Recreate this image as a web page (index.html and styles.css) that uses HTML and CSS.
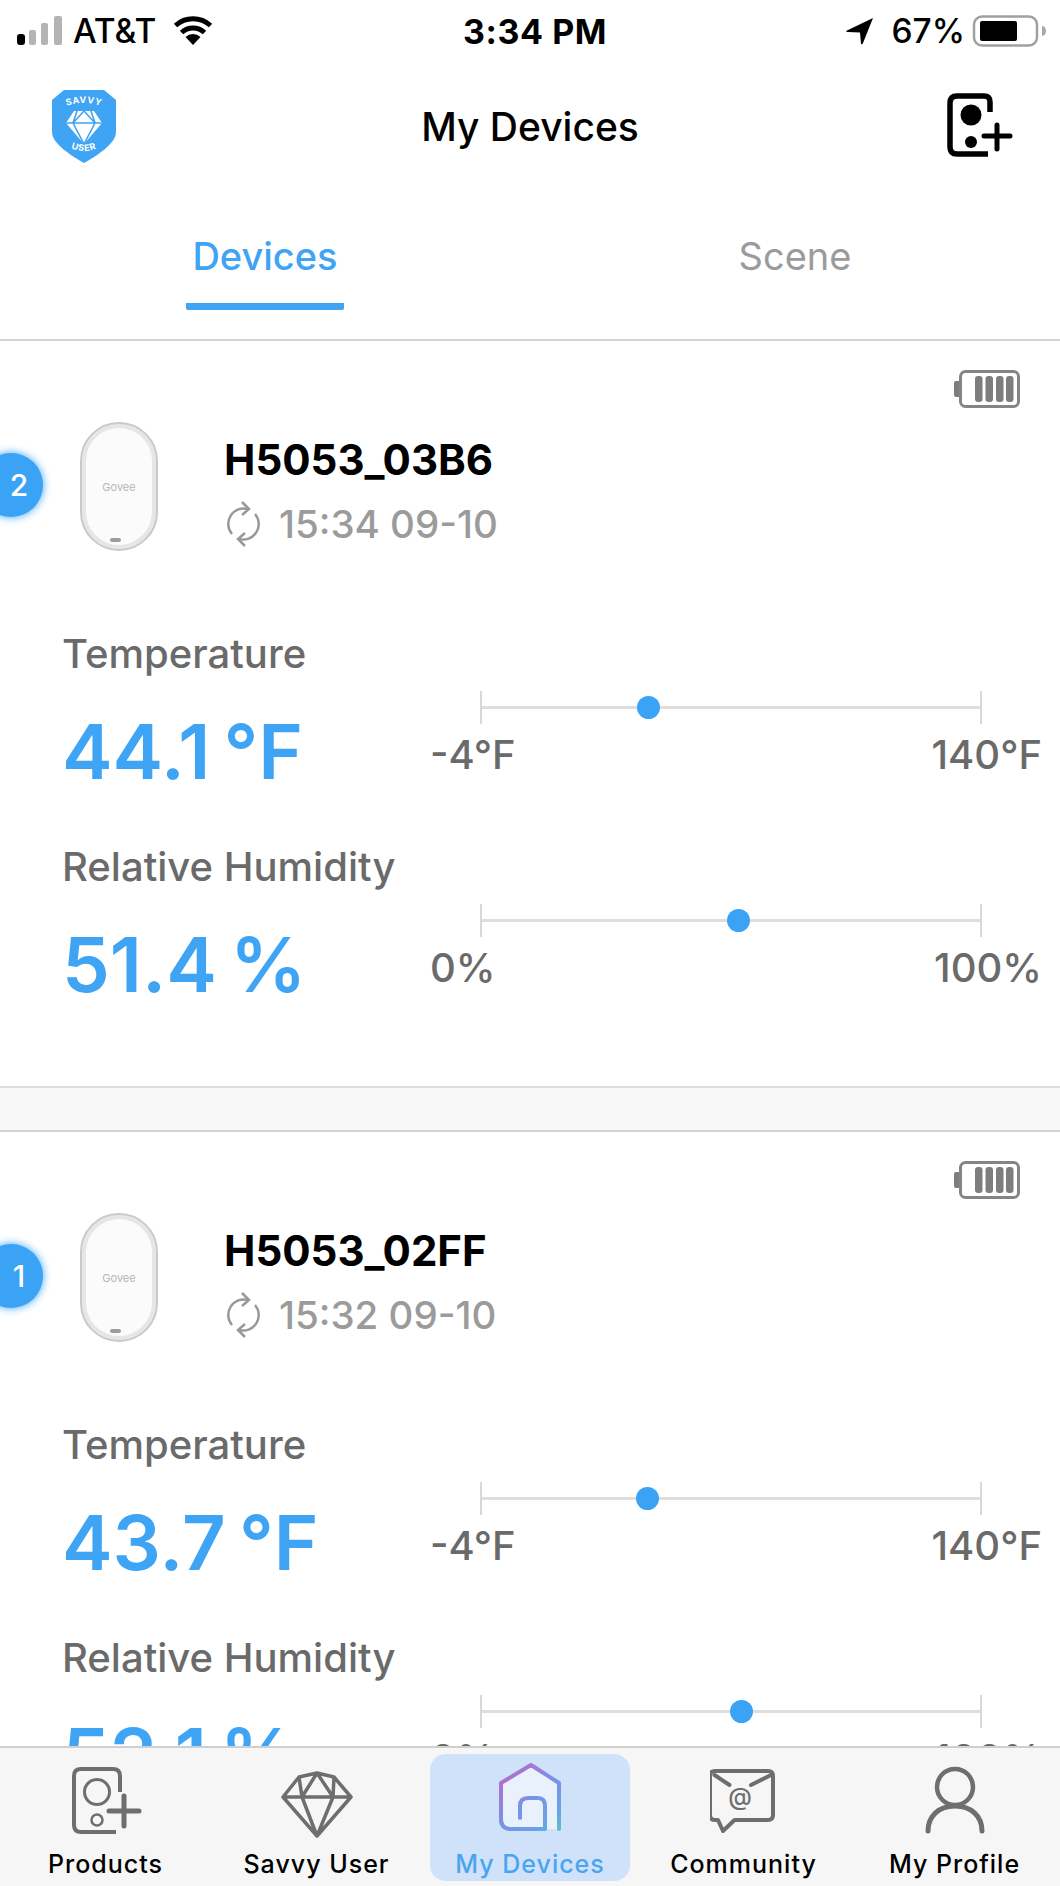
FILE: index.html
```html
<!DOCTYPE html>
<html lang="en">
<head>
    <meta charset="UTF-8">
    <meta name="viewport" content="width=device-width, initial-scale=1.0">
    <title>My Devices</title>
    <link rel="stylesheet" href="styles.css">
</head>
<body>

    <div class="status-bar">
        <div class="status-left">
            <svg class="signal" width="46" height="30" viewBox="0 0 46 30">
                <rect x="0" y="18" width="8" height="11" rx="3" fill="#000"/>
                <rect x="12" y="14" width="7" height="15" rx="2" fill="#b4b4b4"/>
                <rect x="24" y="7" width="7" height="22" rx="2" fill="#b4b4b4"/>
                <rect x="37" y="0" width="8" height="29" rx="2" fill="#b4b4b4"/>
            </svg>
            <span>AT&amp;T</span>
            <svg class="wifi" width="40" height="30" viewBox="0 0 40 30">
                <path d="M20 29 L12.5 21 A11 11 0 0 1 27.5 21 Z" fill="#000"/>
                <path d="M8.5 16.5 A17 17 0 0 1 31.5 16.5" fill="none" stroke="#000" stroke-width="5"/>
                <path d="M2.5 9.5 A26 26 0 0 1 37.5 9.5" fill="none" stroke="#000" stroke-width="5"/>
            </svg>
        </div>
        <div class="status-time">3:34 PM</div>
        <div class="status-right">
            <svg class="arrow" width="28" height="27" viewBox="0 0 28 27">
                <path d="M27 0 L0 13 Q0 14 2 14 L14 14.5 L15 26 Q16 27 17 25 Z" fill="#000"/>
            </svg>
            <span>67%</span>
            <svg class="battery-status" width="76" height="32" viewBox="0 0 76 32">
                <rect x="2" y="1.5" width="63" height="29" rx="8" fill="none" stroke="#a0a0a0" stroke-width="2.5"/>
                <rect x="8" y="6" width="37" height="20" rx="2" fill="#000"/>
                <path d="M70 11 a4 5 0 0 1 0 10 Z" fill="#a8a8a8"/>
            </svg>
        </div>
    </div>

    <div class="header">
        <svg class="shield" width="68" height="76" viewBox="0 0 68 76">
            <defs>
                <path id="shieldTop" d="M14 19 Q34 11 54 19"/>
                <path id="shieldBottom" d="M16 58 Q34 68 52 58"/>
            </defs>
            <path d="M14 2 H54 L66 12 V44 C66 56 46 68 34 75 C22 68 2 56 2 44 V12 Z" fill="#3fa4f4"/>
            <path d="M24 23 H44 L52 35 L34 56 L16 35 Z" fill="#fff"/>
            <path d="M16 35 H52 M27 23 L23 35 L34 56 L45 35 L41 23 M34 23 L23 35 M34 23 L45 35" fill="none" stroke="#3fa4f4" stroke-width="1.6"/>
            <text class="shield-text"><textPath href="#shieldTop" startOffset="50%">SAVVY</textPath></text>
            <text class="shield-text"><textPath href="#shieldBottom" startOffset="50%">USER</textPath></text>
        </svg>
        <h1>My Devices</h1>
        <svg class="add-device" width="66" height="66" viewBox="0 0 66 66">
            <path d="M43 19 V9 Q43 3 37 3 H10 Q3 3 3 10 V54 Q3 61 10 61 H41" fill="none" stroke="#000" stroke-width="5.5"/>
            <circle cx="24" cy="22" r="10.5" fill="#000"/>
            <circle cx="24" cy="49" r="6" fill="#000"/>
            <path d="M37 43 H63 M50 32 V56" fill="none" stroke="#000" stroke-width="5" stroke-linecap="round"/>
        </svg>
    </div>

    <div class="tabs">
        <div class="tab active"><span>Devices</span></div>
        <div class="tab"><span>Scene</span></div>
    </div>

    <div class="device-list">

        <div class="device-card">
            <div class="badge">2</div>
            <svg class="card-battery" width="68" height="38" viewBox="0 0 68 38">
                <path d="M7 11 H3 Q1 11 1 13 V25 Q1 27 3 27 H7 Z" fill="#7d7d7d"/>
                <rect x="7.5" y="1.5" width="58" height="35" rx="5" fill="#fff" stroke="#858585" stroke-width="3"/>
                <rect x="22" y="6" width="7.5" height="26" rx="3" fill="#7d7d7d"/>
                <rect x="32.5" y="6" width="7.5" height="26" rx="3" fill="#7d7d7d"/>
                <rect x="43" y="6" width="7.5" height="26" rx="3" fill="#7d7d7d"/>
                <rect x="53" y="6" width="7.5" height="26" rx="3" fill="#7d7d7d"/>
            </svg>
            <div class="device-top">
                <div class="sensor">
                    <span class="sensor-logo">Govee</span>
                    <span class="sensor-slot"></span>
                </div>
                <div class="device-info">
                    <div class="device-name">H5053_03B6</div>
                    <div class="device-sync">
                        <svg width="37" height="46" viewBox="0 0 37 46">
                            <path d="M23 8 A15.5 15.5 0 0 0 7 33 M14 38 A15.5 15.5 0 0 0 30 13" fill="none" stroke="#999" stroke-width="2.5"/>
                            <path d="M17 1 L24 8 L17 14 M20 32 L13 38 L20 45" fill="none" stroke="#999" stroke-width="2.5"/>
                        </svg>
                        <span>15:34 09-10</span>
                    </div>
                </div>
            </div>
            <div class="reading">
                <div class="reading-text">
                    <div class="reading-label">Temperature</div>
                    <div class="reading-value">44.1 °F</div>
                </div>
                <div class="range">
                    <div class="range-track"><span class="range-dot" style="left: 33.3%"></span></div>
                    <div class="range-limits"><span>-4°F</span><span>140°F</span></div>
                </div>
            </div>
            <div class="reading">
                <div class="reading-text">
                    <div class="reading-label">Relative Humidity</div>
                    <div class="reading-value">51.4 %</div>
                </div>
                <div class="range">
                    <div class="range-track"><span class="range-dot" style="left: 51.4%"></span></div>
                    <div class="range-limits"><span>0%</span><span>100%</span></div>
                </div>
            </div>
        </div>

        <div class="device-card">
            <div class="badge">1</div>
            <svg class="card-battery" width="68" height="38" viewBox="0 0 68 38">
                <path d="M7 11 H3 Q1 11 1 13 V25 Q1 27 3 27 H7 Z" fill="#7d7d7d"/>
                <rect x="7.5" y="1.5" width="58" height="35" rx="5" fill="#fff" stroke="#858585" stroke-width="3"/>
                <rect x="22" y="6" width="7.5" height="26" rx="3" fill="#7d7d7d"/>
                <rect x="32.5" y="6" width="7.5" height="26" rx="3" fill="#7d7d7d"/>
                <rect x="43" y="6" width="7.5" height="26" rx="3" fill="#7d7d7d"/>
                <rect x="53" y="6" width="7.5" height="26" rx="3" fill="#7d7d7d"/>
            </svg>
            <div class="device-top">
                <div class="sensor">
                    <span class="sensor-logo">Govee</span>
                    <span class="sensor-slot"></span>
                </div>
                <div class="device-info">
                    <div class="device-name">H5053_02FF</div>
                    <div class="device-sync">
                        <svg width="37" height="46" viewBox="0 0 37 46">
                            <path d="M23 8 A15.5 15.5 0 0 0 7 33 M14 38 A15.5 15.5 0 0 0 30 13" fill="none" stroke="#999" stroke-width="2.5"/>
                            <path d="M17 1 L24 8 L17 14 M20 32 L13 38 L20 45" fill="none" stroke="#999" stroke-width="2.5"/>
                        </svg>
                        <span>15:32 09-10</span>
                    </div>
                </div>
            </div>
            <div class="reading">
                <div class="reading-text">
                    <div class="reading-label">Temperature</div>
                    <div class="reading-value">43.7 °F</div>
                </div>
                <div class="range">
                    <div class="range-track"><span class="range-dot" style="left: 33.1%"></span></div>
                    <div class="range-limits"><span>-4°F</span><span>140°F</span></div>
                </div>
            </div>
            <div class="reading">
                <div class="reading-text">
                    <div class="reading-label">Relative Humidity</div>
                    <div class="reading-value">52.1 %</div>
                </div>
                <div class="range">
                    <div class="range-track"><span class="range-dot" style="left: 52.1%"></span></div>
                    <div class="range-limits"><span>0%</span><span>100%</span></div>
                </div>
            </div>
        </div>

    </div>

    <div class="tab-bar">
        <div class="tab-item">
            <svg width="72" height="76" viewBox="0 0 72 76">
                <path d="M50 30 V14 Q50 7 43 7 H11 Q4 7 4 14 V63 Q4 70 11 70 H46" fill="none" stroke="#6e6e6e" stroke-width="4"/>
                <circle cx="27" cy="30" r="12.5" fill="none" stroke="#6e6e6e" stroke-width="3"/>
                <circle cx="27" cy="58" r="5.5" fill="none" stroke="#6e6e6e" stroke-width="2.5"/>
                <path d="M39 49 H69 M54 34 V64" fill="none" stroke="#6e6e6e" stroke-width="5" stroke-linecap="round"/>
            </svg>
            <span>Products</span>
        </div>
        <div class="tab-item">
            <svg width="72" height="76" viewBox="0 0 72 76">
                <path d="M18 15 L36 11 L53 15 L70 35 L36 74 L2 35 Z M2 35 H70 M18 15 L21 35 L36 74 L52 35 L53 15 M36 11 L21 35 M36 11 L52 35" fill="none" stroke="#6e6e6e" stroke-width="3.5" stroke-linejoin="round"/>
            </svg>
            <span>Savvy User</span>
        </div>
        <div class="tab-item selected">
            <svg width="64" height="76" viewBox="0 0 64 76">
                <defs>
                    <linearGradient id="houseStroke" gradientUnits="userSpaceOnUse" x1="8" y1="5" x2="62" y2="68">
                        <stop offset="0" stop-color="#bb68c6"/>
                        <stop offset="0.45" stop-color="#7f8fe4"/>
                        <stop offset="0.85" stop-color="#64a6e8"/>
                        <stop offset="1" stop-color="#5fc0b8"/>
                    </linearGradient>
                </defs>
                <path d="M3 21 L33 3 L61 21 V67 H13 Q3 67 3 57 Z" fill="#fff" fill-opacity="0.55"/>
                <path d="M61 67 V21 L33 3 L3 21 V57 Q3 67 13 67 H47 V44 Q47 36 40 36 H30 Q22 36 22 44 V56" fill="none" stroke="url(#houseStroke)" stroke-width="4" stroke-linecap="round" stroke-linejoin="round"/>
            </svg>
            <span>My Devices</span>
        </div>
        <div class="tab-item">
            <svg width="68" height="76" viewBox="3 0 68 76">
                <path d="M8 9 H61 Q66 9 66 14 V53 Q66 58 61 58 H27.5 L16 69 L11 58 H8 Q3 58 3 53 V14 Q3 9 8 9 Z" fill="none" stroke="#6e6e6e" stroke-width="4" stroke-linejoin="round"/>
                <path d="M7.5 13 L22.5 23 M64 13 L44 23" fill="none" stroke="#6e6e6e" stroke-width="4" stroke-linecap="round"/>
                <text x="33.5" y="43" class="at-sign">@</text>
            </svg>
            <span>Community</span>
        </div>
        <div class="tab-item">
            <svg width="62" height="76" viewBox="0 0 62 76">
                <circle cx="31" cy="25" r="18" fill="none" stroke="#6e6e6e" stroke-width="4.5"/>
                <path d="M4 69 C4 54 15 44 31 44 C47 44 58 54 58 69" fill="none" stroke="#6e6e6e" stroke-width="5" stroke-linecap="round"/>
            </svg>
            <span>My Profile</span>
        </div>
    </div>

</body>
</html>
```

FILE: styles.css
```css
* {
    box-sizing: border-box;
}

body {
    margin: 0;
    padding: 0;
    width: 1060px;
    height: 1886px;
    overflow: hidden;
    background: #fff;
    font-family: Inter, 'Liberation Sans', sans-serif;
    color: #000;
    display: flex;
    flex-direction: column;
}

/* phone status bar */
.status-bar {
    height: 60px;
    flex: none;
    display: flex;
    justify-content: space-between;
    align-items: center;
    padding: 2px 12px 0 17px;
    font-size: 33.5px;
    font-weight: 500;
    position: relative;
}

.status-left,
.status-right {
    display: flex;
    align-items: center;
}

.status-left span {
    margin-left: 10px;
}

.wifi {
    margin-left: 17px;
}

.status-right span {
    margin: 0 7px 0 17px;
}

.status-time {
    position: absolute;
    left: 10px;
    right: 0;
    text-align: center;
    font-size: 34px;
    font-weight: 700;
    letter-spacing: 0.6px;
}

/* title row */
.header {
    height: 134px;
    flex: none;
    display: flex;
    justify-content: space-between;
    align-items: center;
    padding: 0 47px 2px 50px;
    position: relative;
}

.header h1 {
    position: absolute;
    left: 0;
    right: 0;
    margin: 0;
    text-align: center;
    font-size: 39px;
    font-weight: 500;
}

.shield-text {
    font-family: Inter, sans-serif;
    font-size: 9px;
    font-weight: 700;
    letter-spacing: 0.6px;
    fill: #fff;
    text-anchor: middle;
}

/* Devices / Scene switch */
.tabs {
    height: 147px;
    flex: none;
    display: flex;
    border-bottom: 2px solid #d4d4d4;
}

.tab {
    width: 50%;
    display: flex;
    justify-content: center;
    padding-top: 38px;
    font-size: 38px;
    color: #9b9b9b;
}

.tab span {
    display: block;
    height: 78px;
    padding: 1px 6px 0;
}

.tab.active {
    color: #3fa4f4;
    font-weight: 500;
}

.tab.active span {
    border-bottom: 7px solid #3fa4f4;
    border-radius: 2px;
}

/* scrolling list of sensors */
.device-list {
    flex: 1;
    overflow: hidden;
    background: #f8f8f8;
}

.device-card {
    position: relative;
    height: 747px;
    margin-bottom: 44px;
    padding: 81px 18px 0 62px;
    background: #fff;
    border-bottom: 2px solid #dcdcdc;
    box-shadow: 0 -2px 0 #d4d4d4;
}

.badge {
    position: absolute;
    left: -21px;
    top: 112px;
    width: 64px;
    height: 64px;
    padding-left: 16px;
    border-radius: 50%;
    background: #3ba3f6;
    box-shadow: 0 0 8px #3ba3f6;
    color: #fff;
    font-size: 30px;
    font-weight: 500;
    line-height: 64px;
    text-align: center;
}

.card-battery {
    position: absolute;
    right: 39px;
    top: 29px;
}

.device-top {
    display: flex;
    align-items: flex-start;
    height: 129px;
}

.sensor {
    position: relative;
    flex: none;
    width: 78px;
    height: 129px;
    margin-left: 18px;
    border: 2px solid #c9c9c9;
    border-radius: 39px;
    background: #fbfbfb;
    box-shadow: inset 0 0 0 4px #e6e6e6;
    display: flex;
    align-items: center;
    justify-content: center;
}

.sensor-logo {
    font-size: 11px;
    color: #b5b5b5;
}

.sensor-slot {
    position: absolute;
    bottom: 7px;
    left: 28px;
    width: 11px;
    height: 4px;
    border-radius: 2px;
    background: #9d9d9d;
}

.device-info {
    margin: 14px 0 0 66px;
}

.device-name {
    font-size: 42px;
    font-weight: 700;
    line-height: 48px;
}

.device-sync {
    display: flex;
    align-items: center;
    gap: 17px;
    margin-top: 17px;
    font-size: 38.5px;
    font-weight: 500;
    color: #9b9b9b;
    line-height: 46px;
}

.device-sync svg {
    margin-left: 1px;
}

.reading {
    display: flex;
    height: 213px;
}

.device-top + .reading {
    margin-top: 81px;
}

.reading-text {
    width: 368px;
    flex: none;
}

.reading-label {
    font-size: 40px;
    font-weight: 500;
    color: #6a6a6a;
    line-height: 44px;
}

.reading-value {
    margin-top: 31px;
    font-size: 76px;
    font-weight: 600;
    word-spacing: -6px;
    color: #3fa4f4;
    line-height: 88px;
}

.range {
    flex: 1;
    padding-top: 59px;
    min-width: 0;
}

.range-track {
    position: relative;
    width: 502px;
    height: 33px;
    margin-left: 50px;
    border-left: 2px solid #d8d8d8;
    border-right: 2px solid #d8d8d8;
}

.range-track::before {
    content: "";
    position: absolute;
    left: 0;
    right: 0;
    top: 15px;
    height: 3px;
    background: #dedede;
}

.range-dot {
    position: absolute;
    top: 5px;
    width: 23px;
    height: 23px;
    margin-left: -11px;
    border-radius: 50%;
    background: #3ba3f6;
}

.range-limits {
    display: flex;
    justify-content: space-between;
    margin-top: 9px;
    font-size: 40px;
    font-weight: 500;
    color: #6a6a6a;
    line-height: 44px;
}

/* bottom navigation */
.tab-bar {
    height: 140px;
    flex: none;
    display: flex;
    padding: 6px 0 5px;
    background: #f6f6f6;
    border-top: 2px solid #cfcfcf;
    position: relative;
}

.tab-item {
    flex: 1;
    display: flex;
    flex-direction: column;
    align-items: center;
    justify-content: flex-start;
    font-size: 25px;
    font-weight: 500;
    letter-spacing: 1px;
    line-height: 30px;
    border-radius: 16px;
}

.tab-item svg {
    margin-top: 8px;
    margin-bottom: 11px;
}

.tab-item.selected {
    flex: none;
    width: 200px;
    margin: 0 8px;
    background: #cfe2f9;
    color: #4aa5ee;
}

.at-sign {
    font-family: Inter, sans-serif;
    font-size: 24px;
    fill: #6e6e6e;
    text-anchor: middle;
}
```
